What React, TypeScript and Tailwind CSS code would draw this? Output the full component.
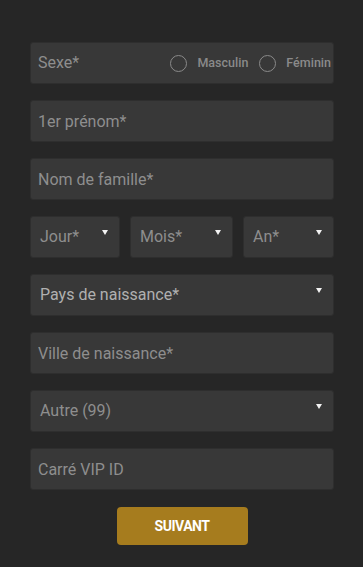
import { useState } from 'react';

function Caret() {
  return (
    <svg width="6" height="5" viewBox="0 0 6 5" className="absolute right-[11px] top-[13px]">
      <path d="M0 0 L6 0 L3 5 Z" fill="#f2f2f2" />
    </svg>
  );
}

function SelectBox({ label, className }: { label: string; className?: string }) {
  return (
    <div
      className={`relative h-[42px] rounded-[3px] border border-[#2e2e2e] bg-[#383838] flex items-center pl-[9px] text-[16px] text-[#8e8e8e] ${className ?? ''}`}
    >
      {label}
      <Caret />
    </div>
  );
}

function TextBox({ placeholder }: { placeholder: string }) {
  const [value, setValue] = useState('');
  return (
    <input
      type="text"
      placeholder={placeholder}
      value={value}
      onChange={(e) => setValue(e.target.value)}
      className="h-[42px] w-full rounded-[3px] border border-[#2e2e2e] bg-[#383838] pl-[7px] text-[16px] text-[#cfcfcf] placeholder:text-[#8e8e8e] outline-none"
    />
  );
}

export default function App() {
  const [sexe, setSexe] = useState('');

  return (
    <div className="min-h-screen w-full bg-[#262626] font-['Roboto',sans-serif]">
      <form className="flex flex-col gap-[16px] px-[30px] pt-[42px] pr-[29px]">
        <div className="h-[42px] rounded-[3px] border border-[#2e2e2e] bg-[#383838] flex items-center pl-[7px] pr-[2px] text-[16px] text-[#8e8e8e]">
          <span>Sexe*</span>
          <div className="ml-auto flex items-center text-[12.5px] font-medium text-[#8a8a8a]">
            <label className="flex items-center gap-[10px]" onClick={() => setSexe('m')}>
              <span className={`h-[17px] w-[17px] rounded-full border border-[#8a8a8a] ${sexe === 'm' ? 'bg-[#8a8a8a]' : ''}`} />
              Masculin
            </label>
            <label className="ml-[11px] flex items-center gap-[10px]" onClick={() => setSexe('f')}>
              <span className={`h-[17px] w-[17px] rounded-full border border-[#8a8a8a] ${sexe === 'f' ? 'bg-[#8a8a8a]' : ''}`} />
              Féminin
            </label>
          </div>
        </div>

        <TextBox placeholder="1er prénom*" />
        <TextBox placeholder="Nom de famille*" />

        <div className="flex gap-[10px]">
          <SelectBox label="Jour*" className="w-[90px]" />
          <SelectBox label="Mois*" className="w-[103px]" />
          <SelectBox label="An*" className="flex-1" />
        </div>

        <SelectBox label="Pays de naissance*" className="text-[#b0b0b0]" />
        <TextBox placeholder="Ville de naissance*" />
        <SelectBox label="Autre (99)" />
        <TextBox placeholder="Carré VIP ID" />

        <div className="flex justify-center pt-[1px]">
          <button
            type="button"
            className="h-[38px] w-[131px] rounded-[4px] bg-[#a67c1e] text-[14px] font-bold tracking-[-0.5px] text-white"
          >
            SUIVANT
          </button>
        </div>
      </form>
    </div>
  );
}
